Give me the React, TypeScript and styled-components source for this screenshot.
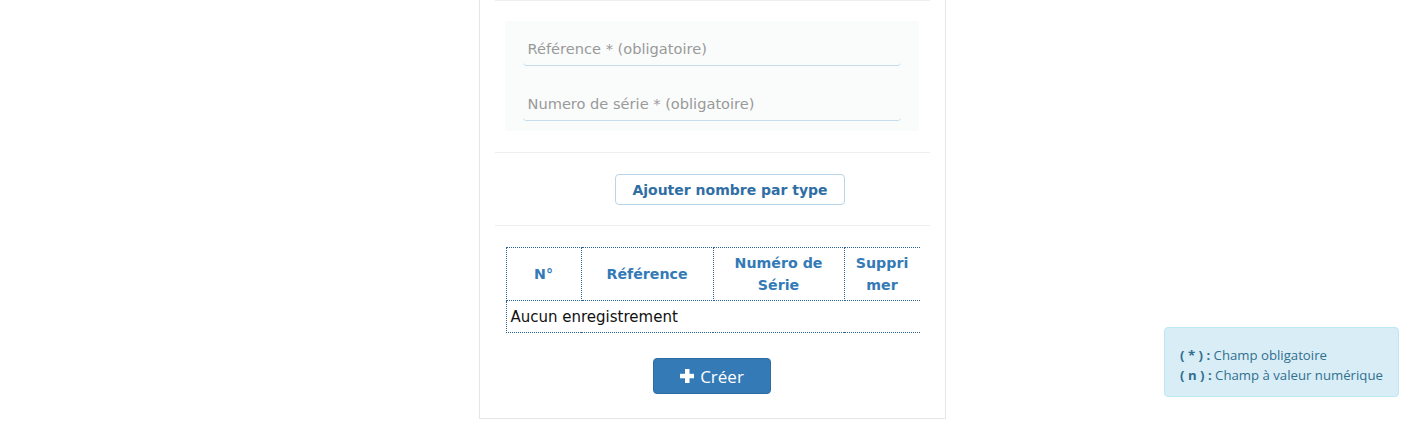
import styled, { createGlobalStyle } from "styled-components";

const GlobalStyle = createGlobalStyle`
  html, body {
    margin: 0;
    padding: 0;
    background: #ffffff;
  }

  body {
    font-family: "DejaVu Sans", Verdana, sans-serif;
    font-size: 14px;
    color: #222222;
  }

  *, *::before, *::after {
    box-sizing: border-box;
  }
`;

const Page = styled.div`
  display: flex;
  justify-content: center;
  padding-bottom: 4px;
`;

const Card = styled.div`
  width: 467px;
  border: 1px solid #e6e6e6;
  border-top: 0;
  padding: 0 15px 24px;
  background: #ffffff;
`;

const Rule = styled.hr`
  margin: 0;
  border: 0;
  border-top: 1px solid #eeeeee;
`;

const Fields = styled.div`
  margin: 20px 11px 21px 10px;
`;

const FieldGroup = styled.div`
  padding: 10px 18px;
  background: #fafcfc;
`;

const Input = styled.input`
  display: block;
  width: 100%;
  height: 35px;
  padding: 6px 5px;
  border: 0;
  border-bottom: 1px solid #c5dcea;
  border-radius: 0 0 4px 4px;
  background: transparent;
  font-family: "DejaVu Sans", Verdana, sans-serif;
  font-size: 14.6px;
  color: #333333;
  outline: none;

  &::placeholder {
    color: #999999;
  }
`;

const ActionRow = styled.div`
  display: flex;
  justify-content: center;
  padding: 21px 0 20px 36px;
`;

const OutlineButton = styled.button`
  height: 31px;
  padding: 0 16px;
  border: 1px solid #b9d5e9;
  border-radius: 4px;
  background: #ffffff;
  color: #2f6ea5;
  font-family: "DejaVu Sans", Verdana, sans-serif;
  font-size: 14px;
  font-weight: bold;
  cursor: pointer;
`;

const TableWrap = styled.div`
  margin: 21px 10px 0 11px;
`;

const Table = styled.table`
  width: 100%;
  border-collapse: collapse;
  table-layout: fixed;
`;

const Head = styled.th<{ $w?: number; $split?: boolean }>`
  width: ${({ $w }) => ($w ? `${$w}px` : "auto")};
  height: 53px;
  padding: 0 8px;
  border: 1px dotted #2a6496;
  color: #337ab7;
  font-size: 14.2px;
  font-weight: bold;
  text-align: center;
  line-height: 22px;
  overflow-wrap: ${({ $split }) => ($split ? "anywhere" : "normal")};

  &:last-child {
    border-right: 0;
  }
`;

const Cell = styled.td`
  height: 32px;
  padding: 0 4px;
  border: 1px dotted #2a6496;
  border-right: 0;
  color: #111111;
  font-size: 15px;
`;

const SubmitRow = styled.div`
  display: flex;
  justify-content: center;
  padding-top: 25px;
`;

const PrimaryButton = styled.button`
  display: flex;
  align-items: center;
  gap: 6px;
  height: 36px;
  padding: 0 26px;
  border: 1px solid #2e6da4;
  border-radius: 4px;
  background: #337ab7;
  color: #ffffff;
  font-family: "Open Sans", "Liberation Sans", sans-serif;
  font-size: 17px;
  cursor: pointer;
`;

const Legend = styled.div`
  position: fixed;
  right: 25px;
  bottom: 26px;
  width: 235px;
  padding: 17px 0 11px 15px;
  border: 1px solid #bce8f1;
  border-radius: 4px;
  background: #d9edf7;
  color: #31708f;
  font-family: "Open Sans", "Liberation Sans", sans-serif;
  font-size: 13.2px;
  line-height: 20px;
  white-space: nowrap;

  b {
    font-weight: bold;
  }
`;

function PlusIcon() {
  return (
    <svg width="14" height="14" viewBox="0 0 14 14" aria-hidden="true">
      <rect x="5" y="0" width="4.5" height="14" fill="#ffffff" />
      <rect x="0" y="4.8" width="14" height="4.5" fill="#ffffff" />
    </svg>
  );
}

export default function App() {
  return (
    <>
      <GlobalStyle />
      <Page>
        <Card>
          <Rule />
          <Fields>
            <FieldGroup>
              <Input placeholder="Référence * (obligatoire)" />
            </FieldGroup>
            <FieldGroup>
              <Input placeholder="Numero de série * (obligatoire)" />
            </FieldGroup>
          </Fields>
          <Rule />
          <ActionRow>
            <OutlineButton type="button">Ajouter nombre par type</OutlineButton>
          </ActionRow>
          <Rule />
          <TableWrap>
            <Table>
              <thead>
                <tr>
                  <Head $w={75}>N°</Head>
                  <Head $w={132}>Référence</Head>
                  <Head $w={131}>Numéro de Série</Head>
                  <Head $split>Supprimer</Head>
                </tr>
              </thead>
              <tbody>
                <tr>
                  <Cell colSpan={4}>Aucun enregistrement</Cell>
                </tr>
              </tbody>
            </Table>
          </TableWrap>
          <SubmitRow>
            <PrimaryButton type="submit">
              <PlusIcon />
              Créer
            </PrimaryButton>
          </SubmitRow>
        </Card>
      </Page>
      <Legend>
        <div>
          <b>( * ) :</b> Champ obligatoire
        </div>
        <div>
          <b>( n ) :</b> Champ à valeur numérique
        </div>
      </Legend>
    </>
  );
}
